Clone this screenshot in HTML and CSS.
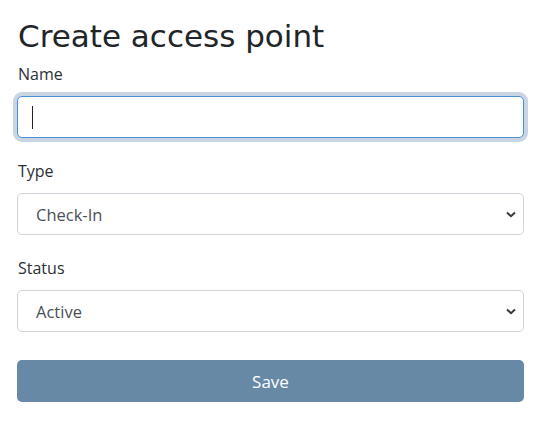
FILE: index.html
```
<!DOCTYPE html>
<html>
<head>
<meta charset="utf-8">
<link rel="stylesheet" href="styles.css">
</head>
<body>
<div class="page">
  <h1 class="title">Create access point</h1>
  <div class="group">
    <label class="label">Name</label>
    <div class="field">
      <input class="control control-focus" type="text">
      <span class="caret"></span>
    </div>
  </div>
  <div class="group">
    <label class="label">Type</label>
    <div class="field">
      <select class="control select"><option>Check-In</option></select>
      <svg class="chevron" width="10" height="7" viewBox="0 0 10 7"><path d="M1 1.5 5 5.2 9 1.5" fill="none" stroke="#343a40" stroke-width="2"/></svg>
    </div>
  </div>
  <div class="group">
    <label class="label">Status</label>
    <div class="field">
      <select class="control select"><option>Active</option></select>
      <svg class="chevron" width="10" height="7" viewBox="0 0 10 7"><path d="M1 1.5 5 5.2 9 1.5" fill="none" stroke="#343a40" stroke-width="2"/></svg>
    </div>
  </div>
  <button class="btn">Save</button>
</div>
</body>
</html>
```
FILE: styles.css
```
html, body {
  margin: 0;
  padding: 0;
  background: #fff;
}
.page {
  padding: 16px 18px 0 17px;
  font-family: "Open Sans", "Noto Sans", sans-serif;
  color: #212529;
}
.title {
  margin: 0 0 6px 1px;
  font-family: "DejaVu Sans", sans-serif;
  font-weight: 400;
  font-size: 31px;
  line-height: 40px;
  color: #212529;
}
.group {
  margin-bottom: 21px;
}
.label {
  display: block;
  font-size: 16px;
  line-height: 24px;
  margin: 0 0 10px 1px;
  color: #2b2f33;
}
.field {
  position: relative;
}
.control {
  display: block;
  box-sizing: border-box;
  width: 100%;
  height: 42px;
  margin: 0;
  padding: 0 18px;
  border: 1px solid #ced4da;
  border-radius: 5px;
  font-family: inherit;
  font-size: 16.5px;
  color: #495057;
  background: #fff;
  outline: none;
}
.control-focus {
  border-color: #4a90d9;
  box-shadow: 0 0 0 4px #c9d5e2;
}
.select {
  appearance: none;
  -webkit-appearance: none;
}
.chevron {
  position: absolute;
  right: 8px;
  top: 18px;
}
.caret {
  position: absolute;
  left: 15px;
  top: 10px;
  width: 1px;
  height: 23px;
  background: #222;
}
.btn {
  display: block;
  box-sizing: border-box;
  width: 100%;
  height: 42px;
  margin-top: 28px;
  border: 0;
  border-radius: 5px;
  background: #6889a5;
  color: #fff;
  font-family: inherit;
  font-size: 17px;
}
```
